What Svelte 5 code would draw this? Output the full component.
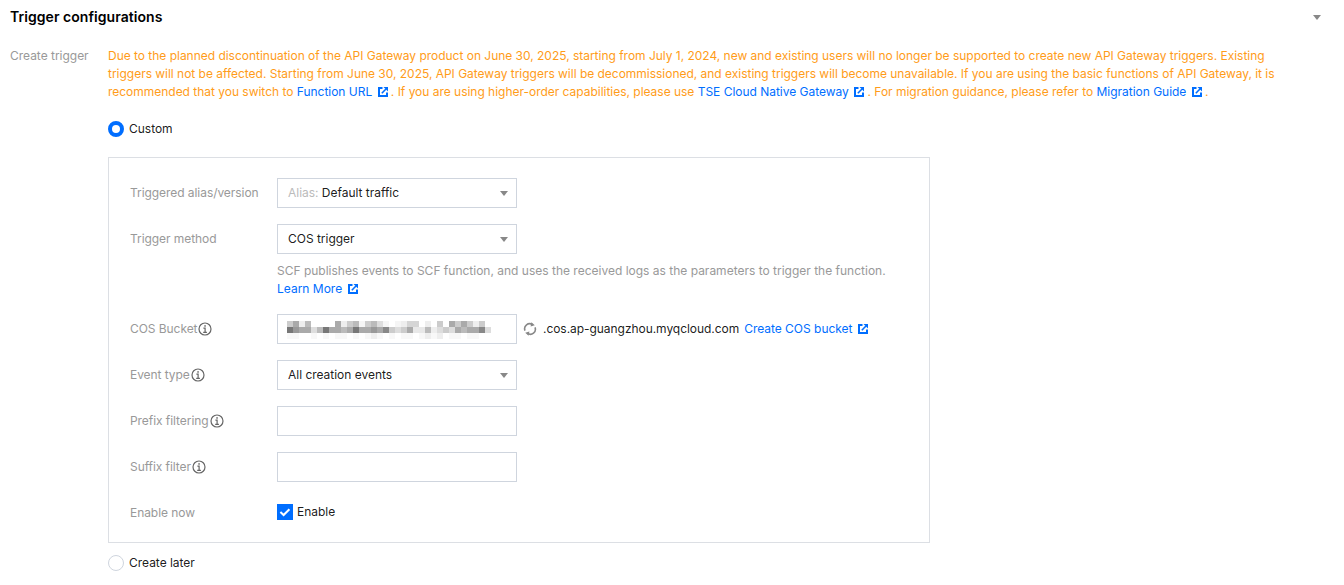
<script>
	const row1 = ['ccc','aaa','eee','bbb','fff','fff','fff','fff','aaa','eee','ccc','bbb','f5f5f5','ccc','bbb','ddd','f5f5f5','fff','f5f5f5','eee','d5d5d5','d5d5d5','fff','eee','fff','ccc','fff','aaa','ccc','aaa','ccc','eee','ccc','fff'];
	const row2 = ['777','999','aaa','aaa','ddd','bbb','777','aaa','aaa','bbb','aaa','777','aaa','aaa','999','aaa','888','ccc','ddd','ccc','aaa','e8e8e8','e8e8e8','bbb','eee','ddd','ccc','ddd','aaa','bbb','aaa','aaa','888','ddd'];
	const row3 = ['f8f8f8','f8f8f8','fff','fff','f8f8f8','fff','f8f8f8','fff','f8f8f8','f8f8f8','fff','f8f8f8','fff','f8f8f8','eee','f8f8f8','fff','f8f8f8','fff','f8f8f8','f8f8f8','fff','f8f8f8','eee','f8f8f8','eee','fff','f8f8f8','f8f8f8','fff','f8f8f8','f8f8f8','fff','fff'];
	const mosaic = [...row1, ...row2, ...row3];
</script>

{#snippet ext()}
	<svg class="ext" width="10" height="10" viewBox="0 0 10 10">
		<path d="M4.5 1H1V9H9V5.5" fill="none" stroke="#006eff" stroke-width="2" />
		<path d="M3.8 6.2L8 2" fill="none" stroke="#006eff" stroke-width="1.6" />
		<path d="M5.5 0H10V4.5Z" fill="#006eff" />
	</svg>
{/snippet}

{#snippet info()}
	<svg class="info" width="14" height="14" viewBox="0 0 14 14">
		<circle cx="7" cy="7" r="6" fill="none" stroke="#666" stroke-width="1.2" />
		<rect x="6.3" y="3.2" width="1.5" height="1.5" fill="#666" />
		<path d="M5.4 6.1H7.1V10.2M5.2 10.3H8.9" fill="none" stroke="#666" stroke-width="1.2" />
	</svg>
{/snippet}

<div class="page">
	<header>
		<h2>Trigger configurations</h2>
		<i class="caret"></i>
	</header>

	<div class="section">
		<div class="section-label">Create trigger</div>
		<div class="section-body">
			<p class="warn">
				Due to the planned discontinuation of the API Gateway product on June 30, 2025, starting from July 1, 2024, new and existing users will no longer be supported to create new API Gateway triggers. Existing triggers will not be affected. Starting from June 30, 2025, API Gateway triggers will be decommissioned, and existing triggers will become unavailable. If you are using the basic functions of API Gateway, it is recommended that you switch to <a href="#a">Function URL {@render ext()}</a> . If you are using higher-order capabilities, please use <a href="#a">TSE Cloud Native Gateway {@render ext()}</a> . For migration guidance, please refer to <a href="#a">Migration Guide {@render ext()}</a> .
			</p>

			<label class="radio custom"><span class="dot on"></span>Custom</label>

			<div class="box">
				<div class="row">
					<div class="lbl">Triggered alias/version</div>
					<div class="ctl select"><span class="muted">Alias:</span>&nbsp;Default traffic<i class="caret"></i></div>
				</div>
				<div class="row">
					<div class="lbl">Trigger method</div>
					<div class="ctl select">COS trigger<i class="caret"></i></div>
				</div>
				<div class="help">
					SCF publishes events to SCF function, and uses the received logs as the parameters to trigger the function.<br />
					<a href="#a">Learn More {@render ext()}</a>
				</div>
				<div class="row">
					<div class="lbl">COS Bucket{@render info()}</div>
					<div class="ctl mosaic-wrap">
						<div class="mosaic">
							{#each mosaic as c}
								<span style="background:#{c}"></span>
							{/each}
						</div>
					</div>
					<svg class="refresh" width="14" height="14" viewBox="0 0 14 14">
						<path d="M2 8.6A5 5 0 0 1 9.4 2.6M12 5.4A5 5 0 0 1 4.6 11.4" fill="none" stroke="#888" stroke-width="1.6" />
						<path d="M8.4 0.2L11.8 3.2L7.6 4.6ZM5.6 13.8L2.2 10.8L6.4 9.4Z" fill="#888" />
					</svg>
					<span class="domain">.cos.ap-guangzhou.myqcloud.com</span>
					<a class="create" href="#a">Create COS bucket {@render ext()}</a>
				</div>
				<div class="row">
					<div class="lbl">Event type{@render info()}</div>
					<div class="ctl select">All creation events<i class="caret"></i></div>
				</div>
				<div class="row">
					<div class="lbl">Prefix filtering{@render info()}</div>
					<div class="ctl"></div>
				</div>
				<div class="row">
					<div class="lbl">Suffix filter{@render info()}</div>
					<div class="ctl"></div>
				</div>
				<div class="row enable">
					<div class="lbl">Enable now</div>
					<label class="check">
						<span class="tick">
							<svg width="16" height="16" viewBox="0 0 16 16">
								<path d="M3.4 8L6.6 11L12.4 5.2" fill="none" stroke="#fff" stroke-width="2" />
							</svg>
						</span>
						Enable
					</label>
				</div>
			</div>

			<label class="radio later"><span class="dot"></span>Create later</label>
		</div>
	</div>
</div>

<style>
	:global(body) {
		font-family: Inter, 'Liberation Sans', sans-serif;
		background: #fff;
		margin: 0;
	}

	.page {
		height: 585px;
		overflow: hidden;
		font-size: 12px;
		line-height: 18px;
		letter-spacing: -0.02px;
		color: rgba(0, 0, 0, 0.9);
	}

	header {
		display: flex;
		justify-content: space-between;
		align-items: center;
		height: 34px;
		padding: 0 23px 0 10px;
	}

	h2 {
		margin: 0;
		font-size: 14px;
		font-weight: 600;
		letter-spacing: 0.05px;
		color: #000;
	}

	.caret {
		width: 0;
		height: 0;
		border-left: 4px solid transparent;
		border-right: 4px solid transparent;
		border-top: 5px solid #888;
	}

	.section {
		display: flex;
		padding: 13px 60px 0 10px;
	}

	.section-label {
		width: 98px;
		flex: none;
		color: #999;
	}

	.section-body {
		flex: 1;
	}

	.warn {
		margin: 0;
		color: #ff9c19;
	}

	a {
		color: #006eff;
		text-decoration: none;
	}

	.ext {
		vertical-align: -1px;
		margin-left: 2px;
	}

	.radio {
		display: flex;
		align-items: center;
		gap: 5px;
	}

	.custom {
		margin-top: 19px;
	}

	.later {
		margin-top: 11px;
	}

	.dot {
		box-sizing: border-box;
		width: 16px;
		height: 16px;
		border-radius: 50%;
		border: 1px solid #cfd5de;
	}

	.dot.on {
		border: 4px solid #006eff;
	}

	.box {
		box-sizing: border-box;
		width: 822px;
		height: 386px;
		margin-top: 19px;
		padding: 20px 21px;
		border: 1px solid #dcdfe4;
	}

	.row {
		display: flex;
		align-items: center;
		height: 30px;
		margin-bottom: 16px;
	}

	.lbl {
		display: flex;
		align-items: center;
		width: 147px;
		flex: none;
		letter-spacing: -0.06px;
		color: #999;
	}

	.info {
		margin-left: 1px;
	}

	.ctl {
		box-sizing: border-box;
		display: flex;
		align-items: center;
		position: relative;
		width: 240px;
		height: 30px;
		padding: 0 10px;
		border: 1px solid #cfd5de;
	}

	.select .caret {
		position: absolute;
		right: 8px;
		top: 12px;
	}

	.muted {
		color: #bbb;
	}

	.help {
		margin: -8px 0 16px 147px;
		letter-spacing: 0;
		color: #999;
	}

	.mosaic-wrap {
		padding: 2px 0 0 9px;
	}

	.mosaic {
		display: grid;
		grid-template-columns: repeat(34, 6px);
		grid-auto-rows: 6px;
	}

	.refresh {
		margin-left: 6px;
	}

	.domain {
		margin-left: 6px;
		letter-spacing: -0.05px;
	}

	.create {
		margin-left: 5px;
	}

	.enable {
		height: 18px;
		margin: 21px 0 0;
	}

	.enable .lbl {
		padding-top: 2px;
	}

	.check {
		display: flex;
		align-items: center;
		gap: 4px;
	}

	.tick {
		display: block;
		width: 16px;
		height: 16px;
		background: #006eff;
	}

	.tick svg {
		display: block;
	}
</style>
